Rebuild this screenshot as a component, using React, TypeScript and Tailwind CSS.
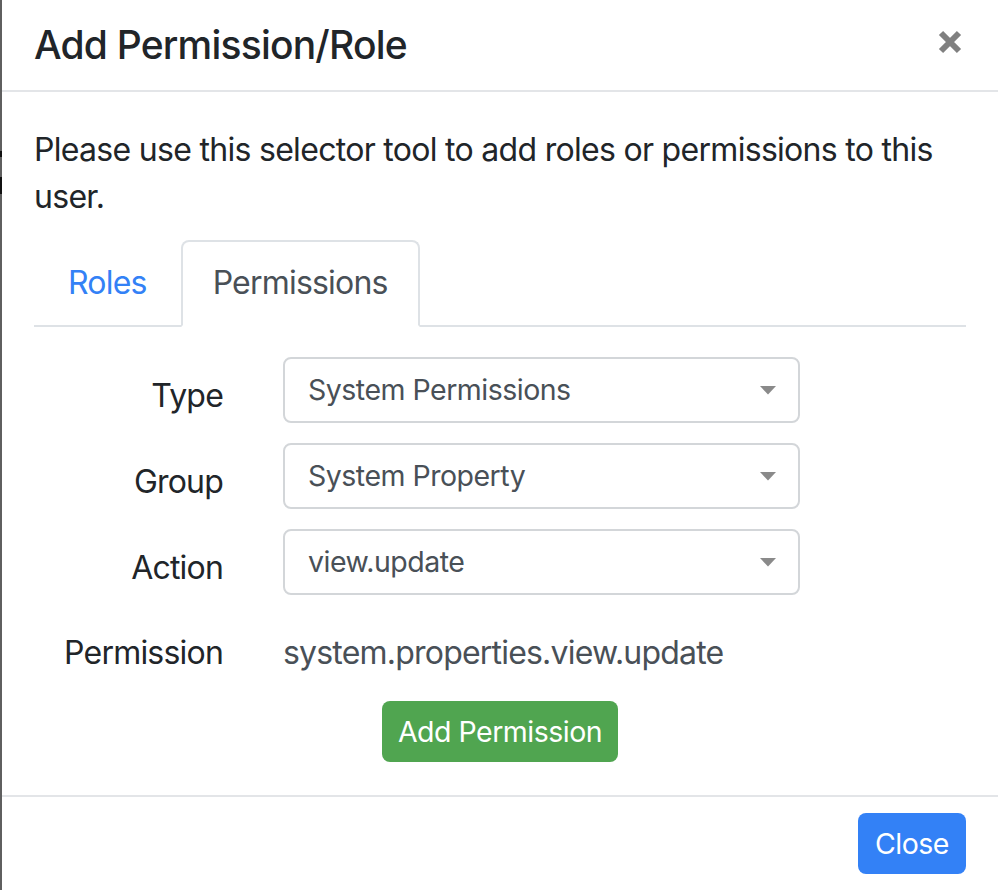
import React from "react";

function Caret() {
  return (
    <svg width="16" height="9" viewBox="0 0 16 9" className="shrink-0">
      <path d="M0 0 L16 0 L8 8.5 Z" fill="#8a8a8a" />
    </svg>
  );
}

function SelectBox({ value }: { value: string }) {
  return (
    <div className="flex h-[66px] w-[517px] items-center justify-between rounded-[8px] border-2 border-[#d3d6d9] bg-white pl-[23px] pr-[22px] text-[28.5px] leading-[44px] tracking-[-0.5px] text-[#495057]">
      <span className="whitespace-nowrap">{value}</span>
      <Caret />
    </div>
  );
}

function Row({ label, pt, children }: { label: string; pt: string; children: React.ReactNode }) {
  return (
    <div className="flex items-start">
      <div className={`w-[189px] ${pt} text-right text-[32px] leading-[48px] tracking-[-0.8px] text-[#212529]`}>{label}</div>
      <div className="ml-[60px]">{children}</div>
    </div>
  );
}

export default function App() {
  return (
    <div
      className="flex h-[890px] w-[998px] overflow-hidden bg-white"
      style={{ fontFamily: "Inter, 'Noto Sans', 'Liberation Sans', sans-serif" }}
    >
      <div className="flex w-[2px] shrink-0 flex-col bg-[#5f5f5f]">
        <div className="mt-[151px] h-[6px] w-[2px] bg-[#111]" />
        <div className="mt-[20px] h-[17px] w-[2px] bg-[#111]" />
      </div>
      <div className="flex flex-1 flex-col">
        {/* header */}
        <div className="flex items-start justify-between border-b-2 border-[#e3e5e8] pb-[21px] pl-[32px] pr-[36px] pt-[21px]">
          <h5 className="whitespace-nowrap text-[39px] font-medium leading-[48px] tracking-[-0.8px] text-[#212529]">
            Add Permission/Role
          </h5>
          <svg width="24" height="24" viewBox="0 0 24 24" className="mt-[9px]">
            <path d="M3 3 L21 21 M21 3 L3 21" stroke="#808080" strokeWidth="6" />
          </svg>
        </div>

        {/* body */}
        <div className="px-[32px] pb-[33px] pt-[34px]">
          <p className="mb-[20px] text-[32px] leading-[47px] tracking-[-0.7px] text-[#212529]">
            Please use this selector tool to add roles or permissions to this user.
          </p>

          <div className="flex border-b-2 border-[#dee2e6] text-[32px] leading-[48px] tracking-[-0.8px]">
            <div className="-mb-[2px] border-2 border-transparent px-[32px] pb-[18px] pt-[17px] text-[#3381f6]">Roles</div>
            <div className="-mb-[2px] rounded-t-[8px] border-2 border-[#dee2e6] border-b-white bg-white px-[30px] pb-[18px] pt-[17px] text-[#495057]">
              Permissions
            </div>
          </div>

          <div className="flex flex-col pt-[30px]">
            <div className="flex flex-col gap-[20px]">
              <Row label="Type" pt="pt-[15px]">
                <SelectBox value="System Permissions" />
              </Row>
              <Row label="Group" pt="pt-[15px]">
                <SelectBox value="System Property" />
              </Row>
              <Row label="Action" pt="pt-[15px]">
                <SelectBox value="view.update" />
              </Row>
              <Row label="Permission" pt="pt-[14px]">
                <div className="whitespace-nowrap pt-[14px] text-[32px] leading-[48px] tracking-[-0.8px] text-[#495057]">
                  system.properties.view.update
                </div>
              </Row>
            </div>
            <div className="mt-[24px] flex justify-center">
              <button className="flex h-[61px] w-[236px] items-center justify-center whitespace-nowrap rounded-[8px] bg-[#50a550] text-[28.5px] leading-[44px] tracking-[-0.5px] text-white">
                Add Permission
              </button>
            </div>
          </div>
        </div>

        {/* footer */}
        <div className="flex justify-end border-t-2 border-[#e3e5e8] pr-[32px] pt-[16px]">
          <button className="flex h-[61px] w-[108px] items-center justify-center rounded-[8px] bg-[#3381f6] text-[28.5px] leading-[44px] tracking-[-0.5px] text-white">
            Close
          </button>
        </div>
      </div>
    </div>
  );
}
